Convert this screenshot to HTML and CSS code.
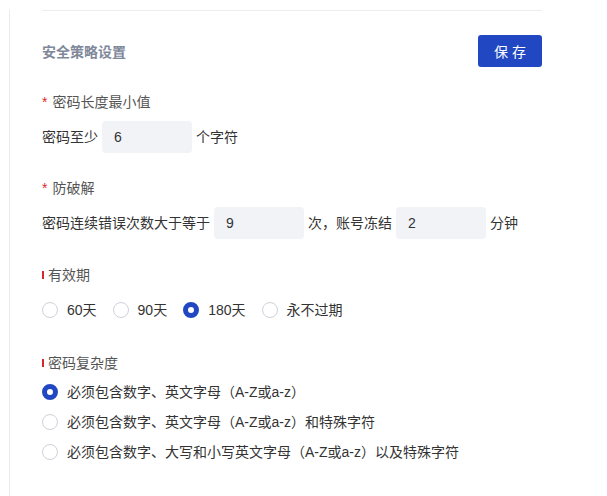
FILE: index.html
```html
<!DOCTYPE html>
<html lang="zh-CN">
<head>
  <meta charset="UTF-8" />
  <meta name="viewport" content="width=device-width, initial-scale=1.0"/>
  <title>安全策略设置</title>
  <link rel="stylesheet" href="styles.css">
</head>
<body>
  <div class="panel">
    <div class="content">
      <div class="divider"></div>

      <div class="header">
        <span class="title">安全策略设置</span>
        <button type="button" class="save-btn">保 存</button>
      </div>

      <div class="field-label first"><span class="star">*</span>密码长度最小值</div>
      <div class="row">
        <span>密码至少</span>
        <input class="num-input" type="text" value="6" />
        <span>个字符</span>
      </div>

      <div class="field-label"><span class="star">*</span>防破解</div>
      <div class="row">
        <span>密码连续错误次数大于等于</span>
        <input class="num-input" type="text" value="9" />
        <span>次，账号冻结</span>
        <input class="num-input" type="text" value="2" />
        <span>分钟</span>
      </div>

      <div class="section-title expiry"><span class="bar"></span>有效期</div>
      <div class="radio-group">
        <label class="radio"><input type="radio" name="expiry" />60天</label>
        <label class="radio"><input type="radio" name="expiry" />90天</label>
        <label class="radio"><input type="radio" name="expiry" checked />180天</label>
        <label class="radio"><input type="radio" name="expiry" />永不过期</label>
      </div>

      <div class="section-title complexity"><span class="bar"></span>密码复杂度</div>
      <div class="radio-list">
        <label class="radio"><input type="radio" name="complexity" checked />必须包含数字、英文字母（A-Z或a-z）</label>
        <label class="radio"><input type="radio" name="complexity" />必须包含数字、英文字母（A-Z或a-z）和特殊字符</label>
        <label class="radio"><input type="radio" name="complexity" />必须包含数字、大写和小写英文字母（A-Z或a-z）以及特殊字符</label>
      </div>
    </div>
  </div>
</body>
</html>
```

FILE: styles.css
```css
* {
  box-sizing: border-box;
}

body {
  margin: 0;
  background: white;
  font-family: "Liberation Sans", "Noto Sans CJK SC", sans-serif;
  font-size: 14px;
  color: #333;
}

.panel {
  margin-left: 9px;
  min-height: 496px;
  border-left: 1px solid #ececef;
}

.content {
  width: 532px;
  padding-left: 32px;
}

.divider {
  margin-top: 10px;
  border-top: 1px solid #ededf0;
}

.header {
  display: flex;
  justify-content: space-between;
  align-items: center;
  margin-top: 24px;
  height: 32px;
}

.title {
  font-size: 14px;
  font-weight: bold;
  color: #7f889b;
}

.save-btn {
  width: 64px;
  height: 32px;
  border: none;
  border-radius: 3px;
  background: #2148c2;
  color: white;
  font-family: inherit;
  font-size: 14px;
  cursor: pointer;
}

.field-label {
  margin-top: 25px;
  line-height: 20px;
  color: #555;
}

.star {
  color: #e0262c;
  margin-right: 5px;
}

.row {
  display: flex;
  align-items: center;
  gap: 4px;
  margin-top: 9px;
  height: 32px;
  line-height: 20px;
}

.num-input {
  width: 90px;
  height: 32px;
  padding: 0 12px;
  border: none;
  border-radius: 4px;
  background: #f2f3f7;
  font-family: inherit;
  font-size: 14px;
  color: #333;
  outline: none;
}

.section-title {
  display: flex;
  align-items: center;
  line-height: 20px;
  color: #555;
}

.section-title.expiry {
  margin-top: 26px;
}

.section-title.complexity {
  margin-top: 33px;
}

.bar {
  width: 2px;
  height: 8px;
  margin-right: 4px;
  background: #d9262b;
}

.radio-group {
  display: flex;
  gap: 16px;
  margin-top: 15px;
}

.radio-list {
  display: flex;
  flex-direction: column;
  gap: 10px;
  margin-top: 9px;
}

.radio {
  display: flex;
  align-items: center;
  line-height: 20px;
  color: #333;
  cursor: pointer;
}

.radio input {
  appearance: none;
  -webkit-appearance: none;
  width: 16px;
  height: 16px;
  margin: 0 9px 0 0;
  border: 1px solid #cdd1da;
  border-radius: 50%;
  background: white;
}

.radio input:checked {
  border: 5px solid #2148c2;
}
```
